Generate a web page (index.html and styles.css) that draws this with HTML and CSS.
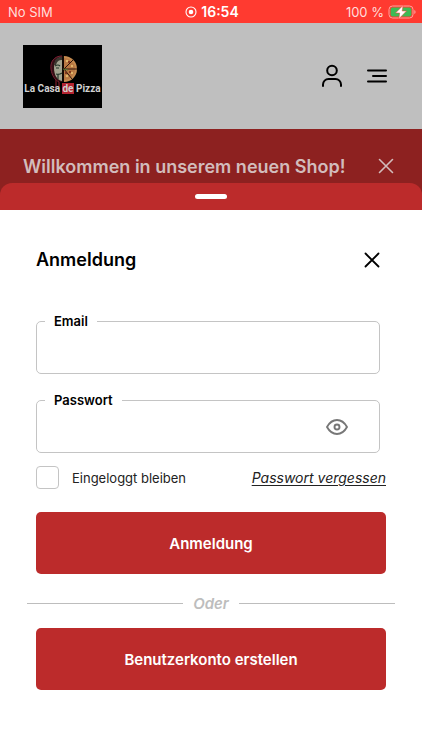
FILE: index.html
```html
<!DOCTYPE html>
<html lang="de">
<head>
<meta charset="utf-8">
<meta name="viewport" content="width=device-width, initial-scale=1">
<title>La Casa de Pizza – Anmeldung</title>
<link rel="stylesheet" href="styles.css">
</head>
<body>
<div class="status">
  <span class="status-left">No SIM</span>
  <span class="status-time">
    <svg width="12" height="12" viewBox="0 0 12 12" aria-hidden="true"><circle cx="6" cy="6" r="5" fill="none" stroke="#fff" stroke-width="1.1"/><circle cx="6" cy="6" r="2.3" fill="#fff"/></svg>
    16:54
  </span>
  <span class="status-right">
    100 %
    <svg width="28" height="16" viewBox="0 0 28 16" aria-hidden="true">
      <rect x="1" y="2" width="24" height="12" rx="3.5" fill="none" stroke="#ffa19b"/>
      <rect x="2.6" y="3.6" width="20.8" height="8.8" rx="2" fill="#3dba55"/>
      <path d="M26.3 6v4q1.3-.6 1.3-2t-1.3-2z" fill="#ffa19b"/>
      <path d="M15 1.5 7.5 9h4.2l-.8 5.8L18.500 7h-4.300z" fill="#fff" stroke="#ff3a30" stroke-width=".5"/>
    </svg>
  </span>
</div>
<header class="header">
  <a class="logo" href="#" aria-label="La Casa de Pizza">
    <svg class="logo-mark" width="28" height="36" viewBox="0 0 28 36" aria-hidden="true">
      <path d="M13 1C5 1 1 7 2 14c1 8 5 12 11 13z" fill="#351016"/>
      <path d="M13 2C8 2 5 7 5 13c0 7 3 12 8 13z" fill="#a2a38f"/>
      <path d="M13 1C5 1 1 7 2 14c1 7 4 11 8 13" fill="none" stroke="#7b2034"/>
      <path d="M5 10c1-6 3-8 8-8v3c-3 0-5 1-6 5z" fill="#3a362f"/>
      <path d="M6 11q3-2 5 0M7 13h3M7 19q3 1 6-1M9 20v4" fill="none" stroke="#24362a" stroke-width="1.200"/>
      <path d="M7 25v11M10 27v5" stroke="#711822" stroke-width="1.300"/>
      <path d="M15 1a13 13 0 0 1 0 26z" fill="#c58b50"/>
      <path d="M15 3a11 11 0 0 1 0 22z" fill="#b87742"/>
      <path d="M14 1v26M15 14l9-9M15 14h13M15 14l8 10" stroke="#2a140b" stroke-width="1"/>
      <g fill="#dfb66c"><circle cx="18" cy="6" r="1.300"/><circle cx="23" cy="11" r="1.200"/><circle cx="18" cy="21" r="1.300"/><circle cx="23" cy="18" r="1.200"/></g>
      <g fill="#702314"><circle cx="20" cy="7" r="1"/><circle cx="21" cy="17" r="1"/><circle cx="17" cy="18" r="1"/></g>
      <path d="M14 14l5 1" stroke="#5b7933"/>
    </svg>
    <span class="logo-text">La Casa <span class="logo-de">de</span> Pizza</span>
  </a>
  <nav class="actions">
    <button class="icon" aria-label="Konto"><svg width="22" height="24" viewBox="0 0 22 24" fill="none" stroke="#000" stroke-width="2" stroke-linecap="round"><circle cx="11" cy="6.500" r="4.800"/><path d="M2 22v-1.500a5.500 5.500 0 0 1 5.500-5.500h7a5.500 5.500 0 0 1 5.500 5.500V22"/></svg></button>
    <button class="icon" aria-label="Menü"><svg width="22" height="24" viewBox="0 0 22 24" stroke="#000" stroke-width="2" stroke-linecap="round"><path d="M2 6.500h18M7 12h13M2 17.500h18"/></svg></button>
  </nav>
</header>
<section class="banner">
  <p class="banner-text">Willkommen in unserem neuen Shop!</p>
  <button class="icon" aria-label="Hinweis schließen"><svg width="16" height="16" viewBox="0 0 16 16" stroke="#d2bcbc" stroke-width="1.600" stroke-linecap="round"><path d="M1.500 1.500l13 13M14.500 1.500l-13 13"/></svg></button>
</section>
<main class="sheet">
  <div class="grip"><span class="grip-bar"></span></div>
  <form class="form">
    <div class="form-head">
      <h1 class="title">Anmeldung</h1>
      <button type="button" class="icon" aria-label="Schließen"><svg width="16" height="16" viewBox="0 0 16 16" stroke="#000" stroke-width="1.800" stroke-linecap="round"><path d="M1.500 1.500l13 13M14.500 1.500l-13 13"/></svg></button>
    </div>
    <fieldset class="field">
      <legend class="legend"><label for="email">Email</label></legend>
      <input class="input" id="email" type="email">
    </fieldset>
    <fieldset class="field">
      <legend class="legend"><label for="password">Passwort</label></legend>
      <input class="input" id="password" type="password">
      <button type="button" class="icon" aria-label="Passwort anzeigen"><svg width="24" height="18" viewBox="0 0 24 18" fill="none" stroke="#777" stroke-width="1.900"><path d="M2 9C4.500 4.500 8 2 12 2s7.500 2.500 10 7c-2.500 4.500-6 7-10 7S4.500 13.500 2 9z" stroke-linejoin="round"/><circle cx="12" cy="9" r="2.500"/></svg></button>
    </fieldset>
    <div class="options">
      <input class="check" id="remember" type="checkbox">
      <label class="remember" for="remember">Eingeloggt bleiben</label>
      <a class="forgot" href="#">Passwort vergessen</a>
    </div>
    <button type="submit" class="primary">Anmeldung</button>
    <div class="divider">Oder</div>
    <button type="button" class="primary">Benutzerkonto erstellen</button>
  </form>
</main>
</body>
</html>
```
FILE: styles.css
```css
* {
  box-sizing: border-box;
}

body {
  margin: 0;
  min-height: 100vh;
  display: flex;
  flex-direction: column;
  background: #fff;
  color: #000;
  font-family: Inter, "Liberation Sans", sans-serif;
  font-size: 14px;
}

button {
  border: 0;
  font: inherit;
  cursor: pointer;
}

.icon {
  display: flex;
  padding: 0;
  background: none;
}

.status {
  display: grid;
  grid-template-columns: 1fr auto 1fr;
  align-items: center;
  height: 23px;
  padding: 0 6px 0 8px;
  background: #ff3a30;
  color: #fff;
  font-size: 13px;
}

.status-left {
  color: #ffdedc;
}

.status-time,
.status-right {
  display: flex;
  align-items: center;
  gap: 4px;
}

.status-time {
  font-size: 14px;
  font-weight: 600;
}

.status-right {
  justify-content: flex-end;
  color: #ffdedc;
}

.header {
  display: flex;
  align-items: center;
  justify-content: space-between;
  height: 106px;
  padding: 0 34px 0 23px;
  background: #bfbfbf;
}

.logo {
  display: flex;
  flex-direction: column;
  align-items: center;
  width: 79px;
  height: 63px;
  padding-top: 10px;
  background: #000;
  color: #d0d0d0;
  text-decoration: none;
  white-space: nowrap;
}

.logo-mark {
  flex: none;
}

.logo-text {
  margin-top: -8px;
  font: bold 10px/12px Roboto, sans-serif;
}

.logo-de {
  background: #b52431;
}

.actions {
  display: flex;
  gap: 23px;
}

.banner {
  display: flex;
  align-items: center;
  justify-content: space-between;
  height: 74px;
  padding: 0 28px 0 23px;
  background: #8d2120;
}

.banner-text {
  margin: 0;
  color: #d2bcbc;
  font-size: 18px;
  font-weight: 600;
}

.sheet {
  margin-top: -20px;
}

.grip {
  display: flex;
  align-items: center;
  justify-content: center;
  height: 27px;
  border-radius: 12px 12px 0 0;
  background: #bc2b2b;
}

.grip-bar {
  width: 32px;
  height: 5px;
  border-radius: 3px;
  background: #fff;
}

.form {
  padding: 36px 36px 60px;
  background: #fff;
}

.form-head {
  display: flex;
  align-items: center;
  justify-content: space-between;
  height: 27px;
  margin-bottom: 40px;
  padding-right: 6px;
}

.title {
  margin: 0;
  font-size: 18px;
  font-weight: 600;
}

.field {
  display: flex;
  align-items: center;
  height: 61px;
  margin: 0 6px 18px 0;
  padding: 0 30px 6px 8px;
  border: 1px solid #c4c4c4;
  border-radius: 5px;
}

.legend {
  padding: 0 9px;
  font-size: 13px;
  font-weight: 600;
  line-height: 16px;
}

.input {
  flex: 1;
  min-width: 0;
  height: 36px;
  border: 0;
  outline: 0;
  background: none;
  font: inherit;
}

.options {
  display: flex;
  align-items: center;
  margin: -5px 0 23px;
}

.check {
  appearance: none;
  width: 23px;
  height: 23px;
  margin: 0 13px 0 0;
  border: 1px solid #c4c4c4;
  border-radius: 4px;
}

.check:checked {
  background: #bc2b2b;
}

.remember {
  color: #222;
  font-size: 13px;
}

.forgot {
  margin-left: auto;
  color: #222;
  font-style: italic;
  text-underline-offset: 2px;
}

.primary {
  display: block;
  width: 100%;
  height: 62px;
  border-radius: 5px;
  background: #bc2b2b;
  color: #fff;
  font-size: 15px;
  font-weight: 600;
}

.divider {
  display: flex;
  align-items: center;
  gap: 10px;
  height: 54px;
  margin: 0 -9px;
  padding-top: 4px;
  color: #bdbdbd;
  font-size: 15px;
  font-style: italic;
  font-weight: 600;
}

.divider::before,
.divider::after {
  content: "";
  flex: 1;
  height: 1px;
  background: #bdbdbd;
}
```
